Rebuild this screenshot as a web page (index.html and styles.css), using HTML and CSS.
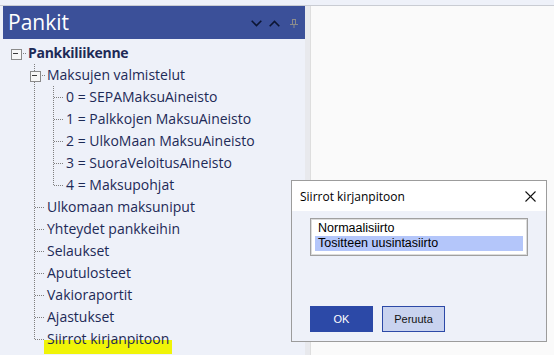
FILE: index.html
```html
<!DOCTYPE html>
<html>
<head>
<meta charset="utf-8">
<link rel="stylesheet" href="styles.css">
</head>
<body>
<div class="topbar"></div>
<div class="main">
  <aside class="panel">
    <div class="header">
      <span class="title">Pankit</span>
      <div class="tools">
        <svg class="chev" width="11" height="7" viewBox="0 0 11 7"><polyline points="0.7,0.8 5.5,5.6 10.3,0.8" fill="none" stroke="#0c1533" stroke-width="1.6"/></svg>
        <svg class="chev" width="11" height="7" viewBox="0 0 11 7"><polyline points="0.7,6.2 5.5,1.4 10.3,6.2" fill="none" stroke="#0c1533" stroke-width="1.6"/></svg>
        <svg class="pin" width="8" height="9" viewBox="0 0 8 9"><rect x="2.5" y="0.5" width="3" height="5" fill="none" stroke="#8c8c8c"/><line x1="0" y1="5.5" x2="8" y2="5.5" stroke="#8c8c8c"/><line x1="4" y1="5.5" x2="4" y2="9" stroke="#8c8c8c"/></svg>
      </div>
    </div>
    <ul class="tree">
      <li>
        <div class="row"><span class="exp"></span><span class="lbl bold">Pankkiliikenne</span></div>
        <ul class="children">
          <li>
            <div class="row"><span class="exp"></span><span class="lbl">Maksujen valmistelut</span></div>
            <ul class="children">
              <li><div class="row"><span class="leaf"></span><span class="lbl">0 = SEPAMaksuAineisto</span></div></li>
              <li><div class="row"><span class="leaf"></span><span class="lbl">1 = Palkkojen MaksuAineisto</span></div></li>
              <li><div class="row"><span class="leaf"></span><span class="lbl">2 = UlkoMaan MaksuAineisto</span></div></li>
              <li><div class="row"><span class="leaf"></span><span class="lbl">3 = SuoraVeloitusAineisto</span></div></li>
              <li><div class="row"><span class="leaf"></span><span class="lbl">4 = Maksupohjat</span></div></li>
            </ul>
          </li>
          <li><div class="row"><span class="leaf"></span><span class="lbl">Ulkomaan maksuniput</span></div></li>
          <li><div class="row"><span class="leaf"></span><span class="lbl">Yhteydet pankkeihin</span></div></li>
          <li><div class="row"><span class="leaf"></span><span class="lbl">Selaukset</span></div></li>
          <li><div class="row"><span class="leaf"></span><span class="lbl">Aputulosteet</span></div></li>
          <li><div class="row"><span class="leaf"></span><span class="lbl">Vakioraportit</span></div></li>
          <li><div class="row"><span class="leaf"></span><span class="lbl">Ajastukset</span></div></li>
          <li><div class="row"><span class="leaf"></span><span class="lbl marked">Siirrot kirjanpitoon</span></div></li>
        </ul>
      </li>
    </ul>
  </aside>
  <div class="splitter"></div>
  <div class="pane"></div>

  <div class="dialog">
    <div class="dlg-title">
      <span>Siirrot kirjanpitoon</span>
      <svg class="close" width="11" height="11" viewBox="0 0 11 11"><line x1="0.5" y1="0.5" x2="10.5" y2="10.5" stroke="#111" stroke-width="1.1"/><line x1="10.5" y1="0.5" x2="0.5" y2="10.5" stroke="#111" stroke-width="1.1"/></svg>
    </div>
    <div class="dlg-body">
      <ul class="listbox">
        <li>Normaalisiirto</li>
        <li class="sel">Tositteen uusintasiirto</li>
      </ul>
      <div class="buttons">
        <button class="btn primary">OK</button>
        <button class="btn secondary">Peruuta</button>
      </div>
    </div>
  </div>
</div>
</body>
</html>
```

FILE: styles.css
```css
* { box-sizing: border-box; }
html, body { margin: 0; padding: 0; }
body {
  width: 554px;
  height: 355px;
  overflow: hidden;
  background: #eef1f9;
  font-family: "Open Sans", "Noto Sans", sans-serif;
}
.topbar {
  height: 6px;
  background: #eef1f9;
  border-bottom: 1px solid #c9ccd3;
}
.main {
  position: relative;
  display: flex;
  height: 349px;
}
.panel {
  width: 305px;
  flex: none;
  background: #eef1f9;
}
.header {
  margin-left: 3px;
  height: 33px;
  background: #3b5099;
  display: flex;
  align-items: center;
  justify-content: space-between;
  padding: 0 7px 0 5px;
}
.title {
  color: #ffffff;
  font-size: 21px;
  line-height: 1;
  margin-top: -1px;
}
.tools {
  display: flex;
  align-items: center;
  margin-top: 1px;
}
.chev { display: block; margin-right: 7px; }
.chev + .chev { margin-right: 10px; }
.pin { display: block; }

.tree, .children {
  list-style: none;
  margin: 0;
}
.tree { padding: 3px 0 0 11px; }
.children { padding: 0 0 0 19px; }
.children > li { position: relative; }
.children > li::before {
  content: "";
  position: absolute;
  left: 4px;
  top: 0;
  bottom: 0;
  width: 1px;
  background: repeating-linear-gradient(to bottom, #7f7f7f 0 1px, transparent 1px 2px);
}
.children > li:last-child::before { bottom: auto; height: 12px; }

.row {
  display: flex;
  align-items: center;
  height: 22px;
  color: #1d2a57;
  font-size: 14px;
  white-space: nowrap;
}
.exp, .leaf {
  position: relative;
  flex: none;
  width: 15px;
  height: 22px;
  margin-right: 2px;
  background-image: repeating-linear-gradient(to right, #7f7f7f 0 1px, transparent 1px 2px);
  background-repeat: no-repeat;
}
.exp { background-position: 10px 11px; background-size: 5px 1px; }
.leaf { background-position: 5px 11px; background-size: 10px 1px; }
.exp::before {
  content: "";
  position: absolute;
  left: 0;
  top: 7px;
  width: 9px;
  height: 9px;
  border: 1px solid #8a8a8a;
  background: #f7f7f7;
}
.exp::after {
  content: "";
  position: absolute;
  left: 2px;
  top: 11px;
  width: 5px;
  height: 1px;
  background: #3a3a3a;
}
.lbl { line-height: 22px; }
.bold { font-weight: 700; letter-spacing: -0.3px; }
.marked {
  background: linear-gradient(to bottom, transparent 0 12px, #f0f407 12px 100%);
  margin-left: -3px;
  padding: 0 3px 4px 3px;
  line-height: 22px;
  height: 26px;
  align-self: flex-start;
}

.splitter {
  width: 5px;
  flex: none;
  background: #e8e9ed;
}
.pane {
  flex: 1;
  background: #fafafa;
  border-left: 1px solid #dedede;
}

.dialog {
  position: absolute;
  left: 291px;
  top: 174px;
  width: 256px;
  height: 162px;
  border: 1px solid #9c9c9c;
  background: #eef1f9;
  display: flex;
  flex-direction: column;
}
.dlg-title {
  height: 30px;
  background: #ffffff;
  display: flex;
  align-items: center;
  justify-content: space-between;
  padding: 0 10px 0 8px;
  font-family: "Open Sans", sans-serif;
  font-size: 12px;
  color: #000;
}
.close { display: block; }
.dlg-body {
  flex: 1;
  padding: 7px 0 0 18px;
}
.listbox {
  list-style: none;
  margin: 0;
  width: 218px;
  height: 38px;
  padding: 2px 4px;
  background: #ffffff;
  border: 1px solid #a0a0a0;
  box-shadow: inset 0 0 0 1px #dcdcdc;
  font-family: "Liberation Sans", Arial, sans-serif;
  font-size: 12.5px;
  color: #000;
}
.listbox li {
  height: 15px;
  line-height: 15px;
  padding-left: 3px;
}
.listbox li.sel { background: #b4c6fa; }
.buttons {
  display: flex;
  gap: 9px;
  margin-top: 50px;
}
.btn {
  width: 63px;
  height: 26px;
  font-family: "Liberation Sans", Arial, sans-serif;
  font-size: 11px;
  padding: 0;
  border-radius: 0;
}
.primary {
  background: #2c49a7;
  border: 1px solid #2c49a7;
  color: #ffffff;
}
.secondary {
  background: #c9d3ef;
  border: 1px solid #2c49a7;
  color: #111;
}
```
